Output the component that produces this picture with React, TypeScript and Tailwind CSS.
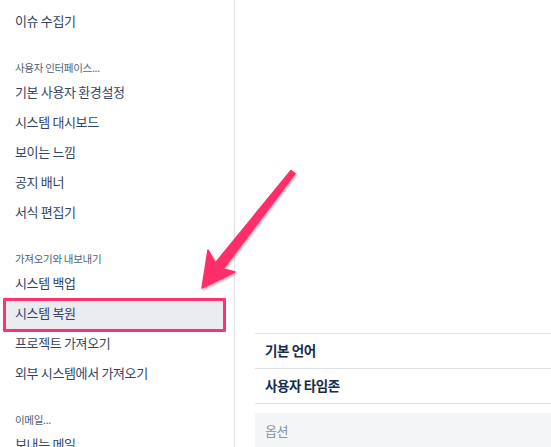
import React from "react";

const font = { fontFamily: '"Noto Sans CJK KR", "Noto Sans", sans-serif' };

const Item = ({ label }: { label: string }) => (
  <div className="h-[30px] flex items-center pl-[15px] pb-[2px] text-[13px] tracking-[-0.35px] text-[#344563]">
    {label}
  </div>
);

const Heading = ({ label }: { label: string }) => (
  <div className="mt-[21px] h-[20px] flex items-center pl-[15px] text-[10.5px] tracking-[-0.3px] text-[#505f79]">
    {label}
  </div>
);

const Arrow = () => (
  <svg
    className="absolute left-0 top-0 pointer-events-none"
    width="551"
    height="447"
    viewBox="0 0 551 447"
  >
    <defs>
      <filter id="sh" x="-20%" y="-20%" width="140%" height="140%">
        <feDropShadow dx="1" dy="1.5" stdDeviation="1.2" floodColor="#000" floodOpacity="0.3" />
      </filter>
    </defs>
    <polygon
      points="291,170.5 215.4,262.9 208,250 202,288 235,272 223.2,269.1 295,173.5"
      fill="#ff2f6b"
      stroke="#ff2f6b"
      strokeWidth="1.5"
      strokeLinejoin="round"
      filter="url(#sh)"
    />
  </svg>
);

export default function App() {
  return (
    <div className="relative w-[551px] h-[447px] overflow-hidden bg-white flex" style={font}>
      <aside className="w-[235px] shrink-0 border-r border-[#dfe1e6] pt-[7px]">
        <Item label="이슈 수집기" />
        <Heading label="사용자 인터페이스..." />
        <Item label="기본 사용자 환경설정" />
        <Item label="시스템 대시보드" />
        <Item label="보이는 느낌" />
        <Item label="공지 배너" />
        <Item label="서식 편집기" />
        <Heading label="가져오기와 내보내기" />
        <Item label="시스템 백업" />
        <div className="relative">
          <div className="absolute -top-[1px] left-[3px] w-[223px] h-[34px] border-[3px] border-[#fb3470] bg-[#ebecf0] rounded-[1px]" />
          <div className="relative">
            <Item label="시스템 복원" />
          </div>
        </div>
        <Item label="프로젝트 가져오기" />
        <Item label="외부 시스템에서 가져오기" />
        <Heading label="이메일..." />
        <Item label="보내는 메일" />
      </aside>
      <main className="flex-1 pt-[333px] pl-[20px]">
        <div className="border-t border-[#dfe1e6] h-[35px] flex items-center pl-[10px] pb-[1px] text-[13.5px] font-bold tracking-[-0.4px] text-[#172b4d]">
          기본 언어
        </div>
        <div className="border-t border-[#dfe1e6] h-[35px] flex items-center pl-[10px] pb-[1px] text-[13.5px] font-bold tracking-[-0.4px] text-[#172b4d]">
          사용자 타임존
        </div>
        <div className="border-t border-[#dfe1e6] pt-[9px]">
          <div className="bg-[#f4f5f7] h-[40px] flex items-start pt-[8px] pl-[10px] text-[13px] tracking-[-0.4px] text-[#8993a4]">
            옵션
          </div>
        </div>
      </main>
      <Arrow />
    </div>
  );
}
